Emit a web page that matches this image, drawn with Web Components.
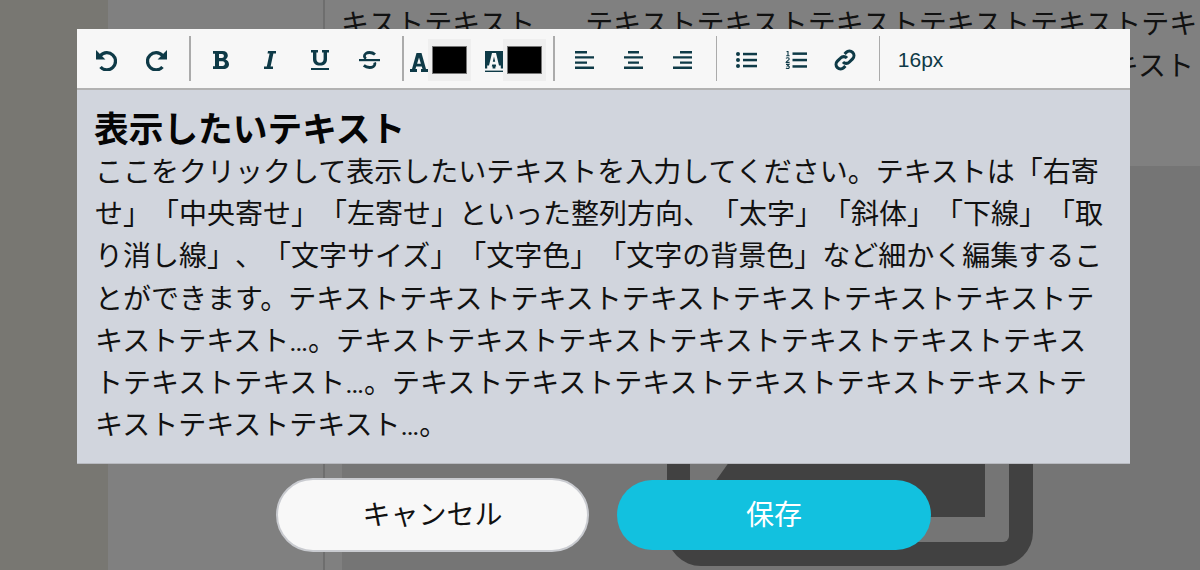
<!DOCTYPE html>
<html lang="ja">
<head>
<meta charset="utf-8">
<title>editor</title>
<style>
  html, body { margin: 0; height: 100%; overflow: hidden; }
  body { font-family: Roboto, "Noto Sans CJK JP", sans-serif; text-spacing-trim: space-all; }
</style>
</head>
<body>
<page-backdrop>
  <text-modal>
    <rich-toolbar slot="toolbar"></rich-toolbar>
    <h2 slot="title" style="margin:0 0 0 -1px;color:#050505;font:700 34.7px/44px Roboto,'Noto Sans CJK JP',sans-serif;">表示したいテキスト</h2>
    ここをクリックして表示したいテキストを入力してください。テキストは「右寄せ」「中央寄せ」「左寄せ」といった整列方向、「太字」「斜体」「下線」「取り消し線」、「文字サイズ」「文字色」「文字の背景色」など細かく編集することができます。テキストテキストテキストテキストテキストテキストテキストテキストテキスト…。テキストテキストテキストテキストテキストテキストテキストテキストテキスト…。テキストテキストテキストテキストテキストテキストテキストテキストテキスト…。
  </text-modal>
</page-backdrop>

<script>
const FONT = 'Roboto, "Noto Sans CJK JP", sans-serif';

// toolbar icons, sizes are the real pixel sizes in the bar
const icons = {
  undo: [21, 21, `<path d="M4.5 5.5A8.6 8.6 0 1 1 4.5 17" fill="none" stroke="currentColor" stroke-width="3.3"/><path d="M0 0V9.4H9.4Z" fill="currentColor"/>`],
  redo: [21, 21, `<path d="M16.5 5.5A8.6 8.6 0 1 0 16.5 17" fill="none" stroke="currentColor" stroke-width="3.3"/><path d="M21 0V9.4H11.6Z" fill="currentColor"/>`],
  bold: [16, 18, `<path fill-rule="evenodd" fill="currentColor" d="M0 0H9.5C13 0 14.8 2 14.8 4.6C14.8 6.4 13.8 7.8 12.4 8.5C14.6 9.2 16 11 16 13.2C16 16 13.8 18 10.5 18H0V15.2H2V2.8H0ZM6 3V7H9C10.2 7 10.9 6.2 10.9 5C10.9 3.8 10.2 3 9 3ZM6 10.2V15H9.6C11 15 11.9 14 11.9 12.6C11.9 11.2 11 10.2 9.6 10.2Z"/>`],
  italic: [12, 18, `<path fill="currentColor" d="M4 0H12V2.6H9.4L6.6 15.4H9V18H0V15.4H2.8L5.6 2.6H3.5Z"/>`],
  underline: [18, 20, `<path fill="currentColor" d="M0 0H7V2.4H5.4V9C5.4 11.4 6.8 12.7 9 12.7C11.2 12.7 12.6 11.4 12.6 9V2.4H11V0H18V2.4H16V9.2C16 13.2 13.2 15.6 9 15.6C4.8 15.6 2 13.2 2 9.2V2.4H0Z"/><rect y="18" width="18" height="2" fill="currentColor"/>`],
  strike: [21, 18, `<path d="M16 3.6C14.5 2.2 12.6 1.5 10.5 1.5C7.5 1.5 5.4 3 5.4 5.2C5.4 6.4 6 7.2 7 7.8M15.6 11.4C15.8 11.9 15.9 12.3 15.9 12.8C15.9 15 13.5 16.5 10.5 16.5C8.4 16.5 6.4 15.8 4.8 14.4" fill="none" stroke="currentColor" stroke-width="2.8"/><rect y="8" width="21" height="2.2" fill="currentColor"/>`],
  font: [18, 19, `<path fill-rule="evenodd" fill="currentColor" d="M6.5 0H11.5L16 16H18V19H11V16H12.5L11.8 13.5H6.2L5.5 16H7V19H0V16H2ZM9 4.5L7.1 10.8H10.9Z"/>`],
  fontbg: [18, 21, `<rect width="18" height="17.5" fill="currentColor"/><rect y="19.6" width="18" height="1.4" fill="currentColor"/><path fill-rule="evenodd" fill="#f7f7f7" d="M7 2H11L14 14.6H15.8V18.6H10.4V15.6H11.2L10.8 13.6H7.2L6.8 15.6H7.6V18.6H2.2V14.6H4ZM9 5.6L7.8 10.8H10.2Z"/>`],
  left: [19, 18, `<path fill="currentColor" d="M0 0H12V2.4H0ZM0 5.2H19V7.6H0ZM0 10.4H12V12.8H0ZM0 15.6H19V18H0Z"/>`],
  center: [19, 18, `<path fill="currentColor" d="M4 0H15V2.4H4ZM0 5.2H19V7.6H0ZM4 10.4H15V12.8H4ZM0 15.6H19V18H0Z"/>`],
  right: [19, 18, `<path fill="currentColor" d="M7 0H19V2.4H7ZM0 5.2H19V7.6H0ZM7 10.4H19V12.8H7ZM0 15.6H19V18H0Z"/>`],
  ul: [21, 16, `<g fill="currentColor"><circle cx="2" cy="2" r="2"/><circle cx="2" cy="8" r="2"/><circle cx="2" cy="14" r="2"/><rect x="7" y="0.8" width="14" height="2.5"/><rect x="7" y="6.8" width="14" height="2.5"/><rect x="7" y="12.8" width="14" height="2.5"/></g>`],
  ol: [22, 18, `<g fill="currentColor"><rect x="7.5" y="1.4" width="14.5" height="2.5"/><rect x="7.5" y="7.8" width="14.5" height="2.5"/><rect x="7.5" y="14.2" width="14.5" height="2.5"/></g><path d="M1.6 .6L3 .2V4.8M1.2 4.8H4.6M1 7.4C2 6.4 4.2 6.6 4.2 8C4.2 9.2 1.6 10 1.2 11.4H4.6M1 13.4H4L2.4 15H3C4.8 15 4.8 17.6 2.8 17.6C2 17.6 1.4 17.4 1 17" fill="none" stroke="currentColor" stroke-width="1.1"/>`],
  link: [22, 22, `<path d="M9 13A4.4 4.4 0 0 0 15.4 13L18.6 9.8A4.5 4.5 0 0 0 12.2 3.4L10.6 5M13 9A4.4 4.4 0 0 0 6.6 9L3.4 12.2A4.5 4.5 0 0 0 9.8 18.6L11.4 17" fill="none" stroke="currentColor" stroke-width="3.1"/>`]
};

class ToolIcon extends HTMLElement {
  connectedCallback() {
    const [w, h, body] = icons[this.getAttribute("name")];
    if (!this.shadowRoot) this.attachShadow({ mode: "open" });
    this.shadowRoot.innerHTML = `
      <style>
        :host { display: flex; align-items: center; justify-content: center; width: var(--btn-w, 49.4px); height: 45px; color: #0e3a47; flex: none; }
        svg { display: block; margin-top: var(--nudge, 3px); }
      </style>
      <svg width="${w}" height="${h}" viewBox="0 0 ${w} ${h}">${body}</svg>`;
  }
}

class ColorSwatch extends HTMLElement {
  constructor() {
    super();
    this.attachShadow({ mode: "open" }).innerHTML = `
      <style>
        :host { display: block; width: 43px; height: 42px; margin-top: 3px; padding: 7px 4px; box-sizing: border-box; background: #efefef; flex: none; }
        div { width: 35px; height: 28px; box-sizing: border-box; background: #000; border: 1.5px solid #777; }
      </style>
      <div></div>`;
  }
}

class RichToolbar extends HTMLElement {
  constructor() {
    super();
    this.attachShadow({ mode: "open" }).innerHTML = `
      <style>
        :host { display: flex; align-items: center; height: 59px; padding-left: 5px; background: #f7f7f7; border-bottom: 2px solid #b2b2b2; color: #0e3a47; }
        i { display: block; width: 1.6px; height: 45px; background: #ababab; flex: none; }
        .color { display: flex; align-items: center; }
        .a { --btn-w: 18px; --nudge: 8px; }
        .b { --btn-w: 18px; --nudge: 6px; }
        .t { --btn-w: 49px; }
        .l { --btn-w: 49.2px; }
        span { font: 400 21px/1 "Liberation Sans", sans-serif; margin: 2px 0 0 17.4px; }
      </style>
      <tool-icon name="undo"></tool-icon>
      <tool-icon name="redo"></tool-icon>
      <i style="margin:0 5.6px 0 8.4px"></i>
      <tool-icon name="bold"></tool-icon>
      <tool-icon name="italic"></tool-icon>
      <tool-icon name="underline"></tool-icon>
      <tool-icon name="strike"></tool-icon>
      <i style="margin:0 6.4px 0 8px"></i>
      <div class="color"><tool-icon class="a" name="font"></tool-icon><color-swatch></color-swatch></div>
      <div class="color" style="margin-left:14px"><tool-icon class="b" name="fontbg"></tool-icon><color-swatch></color-swatch></div>
      <i style="margin:0 5.4px 0 7px"></i>
      <tool-icon class="t" name="left"></tool-icon>
      <tool-icon class="t" name="center"></tool-icon>
      <tool-icon class="t" name="right"></tool-icon>
      <i style="margin:0 4.4px 0 9px"></i>
      <tool-icon class="l" name="ul"></tool-icon>
      <tool-icon class="l" name="ol"></tool-icon>
      <tool-icon class="l" name="link"></tool-icon>
      <i style="margin-left:9.4px"></i>
      <span>16px</span>`;
  }
}

class PillButton extends HTMLElement {
  constructor() {
    super();
    this.attachShadow({ mode: "open" }).innerHTML = `
      <style>
        :host { display: flex; align-items: center; justify-content: center; box-sizing: border-box; border-radius: 37px; padding-top: 2px; font: 400 28px/1 ${FONT}; width: 314px; height: 70px; flex: none; background: #12c1df; color: #fff; }
        :host([plain]) { height: 74px; width: 313px; background: #f8f8f8; color: #111; border: 2px solid #c9cbd0; }
      </style>
      <slot></slot>`;
  }
}

class TextModal extends HTMLElement {
  constructor() {
    super();
    this.attachShadow({ mode: "open" }).innerHTML = `
      <style>
        :host { position: absolute; left: 77px; top: 29px; width: 1053px; display: block; }
        .body { background: #d1d5dd; height: 338px; padding: 18px 18px 17px 18px; color: #111; font: 400 28px/42.17px ${FONT}; border-bottom: 1px solid #b8bac0; }
        .actions { display: flex; align-items: center; gap: 28px; padding: 14px 0 0 199px; }
      </style>
      <slot name="toolbar"></slot>
      <div class="body"><slot name="title"></slot><slot></slot></div>
      <div class="actions">
        <pill-button plain>キャンセル</pill-button>
        <pill-button>保存</pill-button>
      </div>`;
  }
}

class PageBackdrop extends HTMLElement {
  constructor() {
    super();
    this.attachShadow({ mode: "open" }).innerHTML = `
      <style>
        :host { display: flex; position: relative; width: 1200px; height: 570px; overflow: hidden; background: #808080; }
        .nav { width: 108px; background: #787772; flex: none; }
        .side { width: 215px; border-right: 2px solid #6e6e6e; flex: none; }
        main { flex: 1; min-width: 0; color: #111; font: 400 28px/42.17px ${FONT}; }
        .copy { padding: 4px 0 0 16px; height: 166px; box-sizing: border-box; white-space: nowrap; overflow: hidden; }
        .gap { display: inline-block; width: 50px; }
        .end { text-align: right; padding-right: 6px; }
        .shot { height: 404px; margin-left: 17px; background: #757575; }
        svg { display: block; }
      </style>
      <div class="nav"></div>
      <div class="side"></div>
      <main>
        <div class="copy">
          <div>キストテキスト<span class="gap"></span>テキストテキストテキストテキストテキストテキ</div>
          <div class="end">テキスト</div>
        </div>
        <div class="shot">
          <svg width="858" height="404" viewBox="342 166 858 404">
            <rect x="667" y="300" width="366" height="266" rx="34" fill="#414141"/>
            <rect x="690" y="320" width="319" height="222" rx="6" fill="#757575"/>
            <path d="M985 440V517H690L732 458Z" fill="#414141"/>
          </svg>
        </div>
      </main>
      <slot></slot>`;
  }
}

customElements.define("tool-icon", ToolIcon);
customElements.define("color-swatch", ColorSwatch);
customElements.define("rich-toolbar", RichToolbar);
customElements.define("pill-button", PillButton);
customElements.define("text-modal", TextModal);
customElements.define("page-backdrop", PageBackdrop);
</script>
</body>
</html>
